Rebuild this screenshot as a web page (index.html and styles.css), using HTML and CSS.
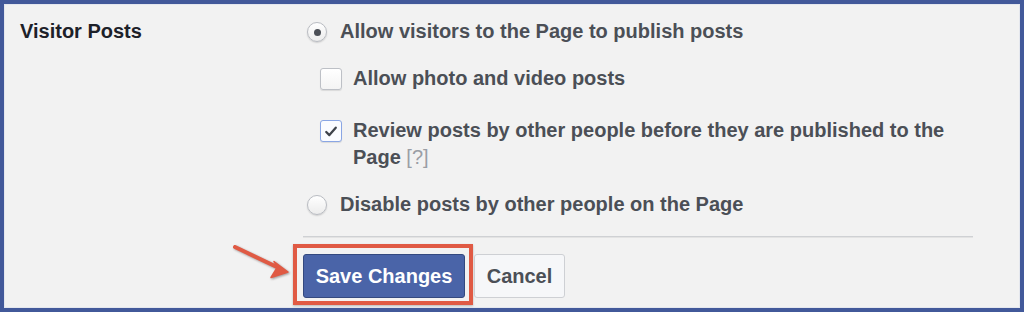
FILE: index.html
```html
<!DOCTYPE html>
<html>
<head>
<meta charset="utf-8">
<link rel="stylesheet" href="styles.css">
</head>
<body>
<div class="frame">
  <div class="panel">
    <div class="setting">
      <div class="label">Visitor Posts</div>
      <div class="options">
        <div class="opt">
          <span class="radio checked"></span>
          <span class="opt-text">Allow visitors to the Page to publish posts</span>
        </div>
        <div class="sub">
          <div class="sub-opt">
            <span class="checkbox"></span>
            <span class="sub-text">Allow photo and video posts</span>
          </div>
          <div class="sub-opt second">
            <span class="checkbox checked">
              <svg viewBox="0 0 21 21" width="21" height="21"><path d="M5.5 11 L8.8 14.3 L15.5 6.5" fill="none" stroke="#3f434a" stroke-width="2.4" stroke-linecap="round" stroke-linejoin="round"/></svg>
            </span>
            <span class="sub-text">Review posts by other people before they are published to the Page&nbsp;<span class="help">[?]</span></span>
          </div>
        </div>
        <div class="opt last">
          <span class="radio"></span>
          <span class="opt-text">Disable posts by other people on the Page</span>
        </div>
        <div class="sep"></div>
        <div class="actions">
          <svg class="arrow" width="64" height="44" viewBox="0 0 64 44">
            <g>
              <line x1="7" y1="7" x2="50" y2="27.5" stroke="#e05a44" stroke-width="4" stroke-linecap="round"/>
              <path d="M60 32 L46 21.5 L49.5 27 L43 37.5 Z" fill="#e05a44" stroke="#e05a44" stroke-width="1.5" stroke-linejoin="round"/>
            </g>
          </svg>
          <div class="highlight">
            <button class="btn primary">Save Changes</button>
          </div>
          <button class="btn secondary">Cancel</button>
        </div>
      </div>
    </div>
  </div>
</div>
</body>
</html>
```
FILE: styles.css
```css
html, body {
  margin: 0;
  padding: 0;
}
body {
  width: 1024px;
  height: 312px;
  overflow: hidden;
  font-family: "Liberation Sans", Arial, Helvetica, sans-serif;
}
.frame {
  box-sizing: border-box;
  width: 1024px;
  height: 312px;
  border: 4px solid #42599a;
}
.panel {
  box-sizing: border-box;
  height: 100%;
  border: 1px solid #e4e7ee;
  background: #f2f2f2;
  padding-top: 13px;
}
.setting {
  display: grid;
  grid-template-columns: 300px 668px;
}
.label {
  padding-left: 15px;
  font-size: 20px;
  line-height: 27px;
  font-weight: bold;
  color: #1d2129;
}
.options {
  font-size: 20px;
  line-height: 27px;
  font-weight: bold;
  color: #4b4f56;
}
.opt {
  display: flex;
  align-items: flex-start;
}
.opt.last {
  margin-top: 20px;
}
.radio {
  box-sizing: border-box;
  flex: none;
  width: 20px;
  height: 20px;
  margin: 4px 13px 0 2px;
  border-radius: 50%;
  border: 1px solid #b9bcc2;
  background: linear-gradient(#ffffff, #ececec);
  box-shadow: 0 1px 1.5px rgba(0,0,0,0.15);
  display: flex;
  align-items: center;
  justify-content: center;
}
.radio.checked::after {
  content: "";
  width: 7px;
  height: 7px;
  border-radius: 50%;
  background: #4b4f56;
}
.sub {
  margin-top: 20px;
  padding-left: 15px;
}
.sub-opt {
  display: flex;
  align-items: flex-start;
}
.sub-opt.second {
  margin-top: 25px;
}
.checkbox {
  box-sizing: border-box;
  flex: none;
  width: 22px;
  height: 22px;
  margin: 3px 11px 0 0;
  border: 1px solid #bdc0c6;
  border-radius: 3px;
  background: linear-gradient(#ffffff, #f4f4f4);
  box-shadow: 0 1px 1px rgba(0,0,0,0.1);
  display: flex;
  align-items: center;
  justify-content: center;
}
.checkbox.checked {
  border-color: #8aa6e4;
  background: #fbfcff;
}
.checkbox svg {
  display: block;
}
.sub-text {
  width: 620px;
}
.help {
  font-weight: normal;
  color: #9a9ea5;
}
.sep {
  margin-top: 18px;
  margin-left: -2px;
  height: 1px;
  border-bottom: 1px solid #e3e3e3;
  background: #cfd1d4;
}
.actions {
  position: relative;
  display: flex;
  align-items: flex-start;
  margin-top: 6px;
  margin-left: -12px;
}
.arrow {
  position: absolute;
  left: -65px;
  top: -4px;
  filter: drop-shadow(1px 1.5px 1px rgba(60,40,40,0.45));
}
.highlight {
  border: 4px solid #e05a44;
  padding: 6px 4px 3px 6px;
  box-shadow: 0 1px 2px rgba(0,0,0,0.25);
}
.btn {
  box-sizing: border-box;
  height: 44px;
  padding: 0;
  font-family: "Liberation Sans", Arial, Helvetica, sans-serif;
  font-size: 20px;
  font-weight: bold;
  border-radius: 3px;
  display: block;
  white-space: nowrap;
  text-align: center;
}
.primary {
  width: 162px;
  background: #4a64a8;
  border: 1px solid #34497f;
  color: #ffffff;
}
.secondary {
  width: 91px;
  margin-top: 10px;
  margin-left: 1px;
  background: #f6f7f9;
  border: 1px solid #ced0d4;
  color: #4b4f56;
}
```
